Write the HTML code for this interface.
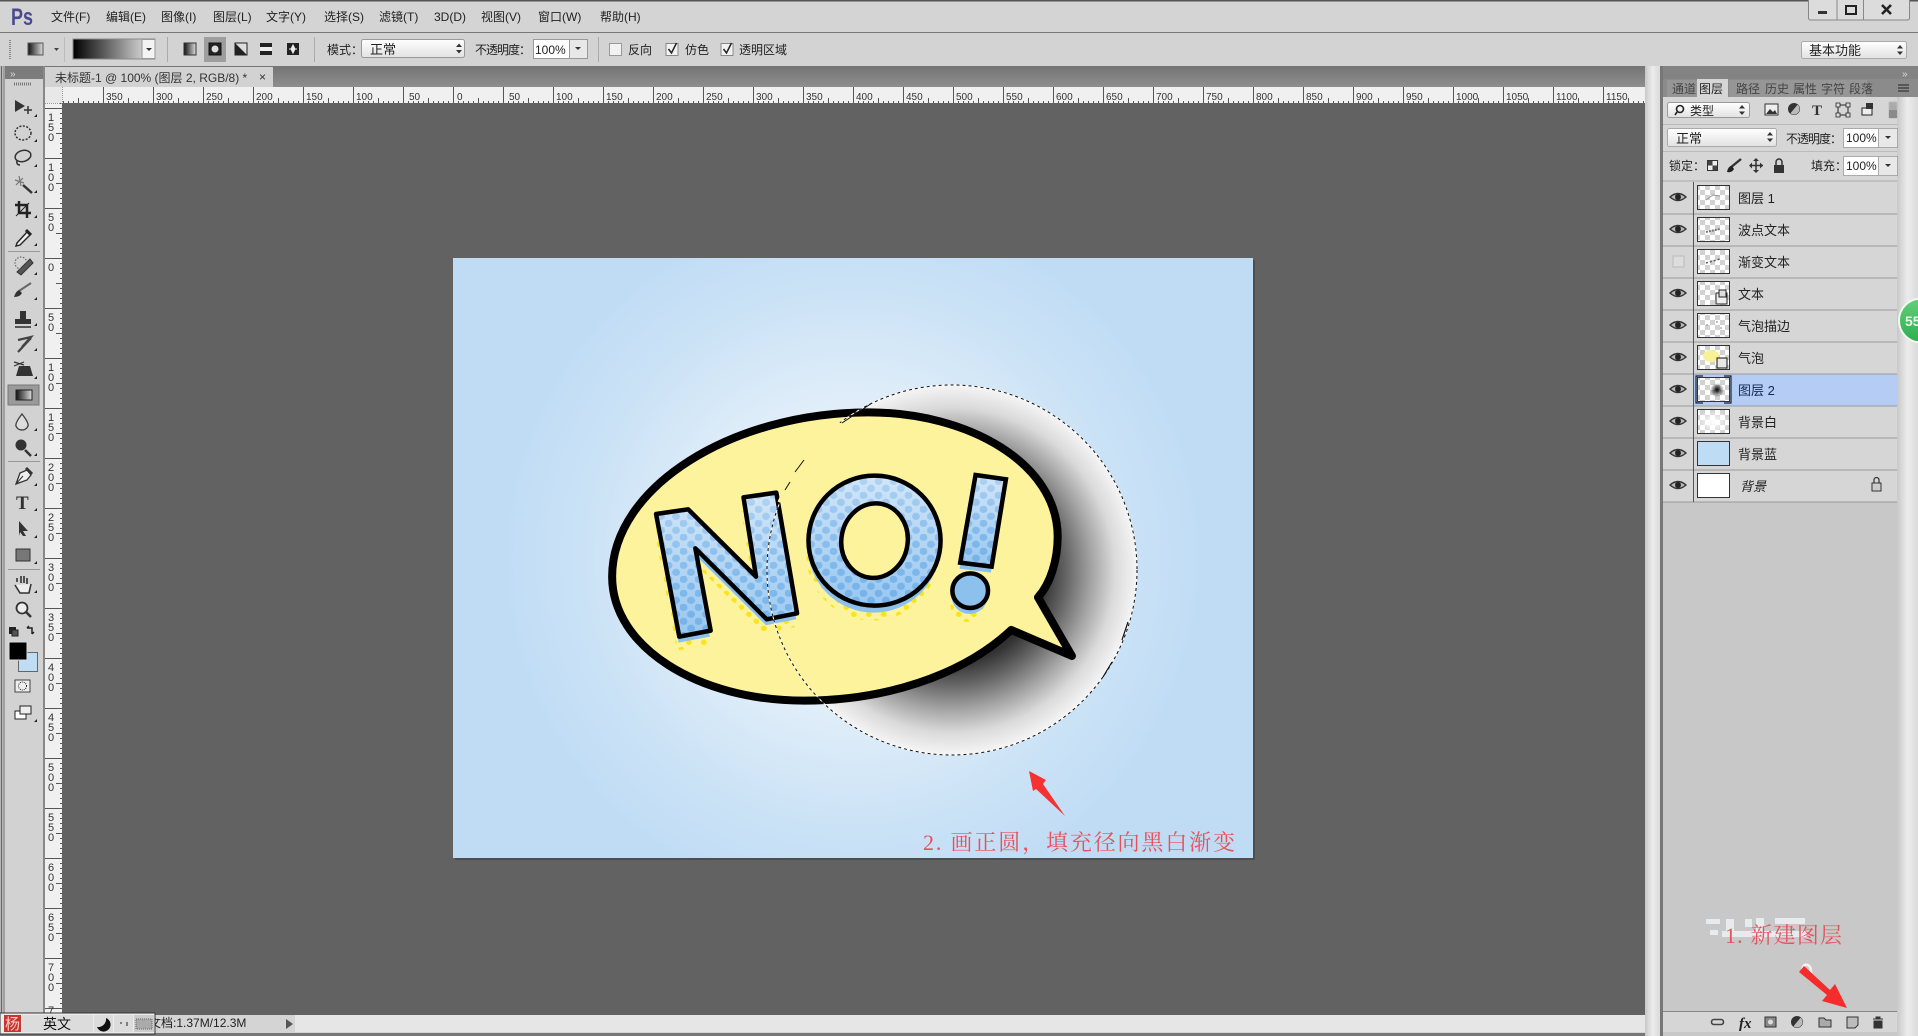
<!DOCTYPE html>
<html lang="zh">
<head>
<meta charset="utf-8">
<title>Photoshop</title>
<style>
html,body{margin:0;padding:0;width:1918px;height:1036px;overflow:hidden;background:#d4d4d4}
svg{display:block}
text{font-family:"Liberation Sans","Noto Sans CJK SC",sans-serif;fill:#222;font-size:12px}
.m text{font-size:12px}
.r text{font-size:10px;fill:#333}
.rv text{font-size:11px;fill:#333}
.l text{font-size:13px;fill:#222}
.nb{vector-effect:non-scaling-stroke}
</style>
</head>
<body>
<svg width="1918" height="1036" viewBox="0 0 1918 1036" xmlns="http://www.w3.org/2000/svg">
<defs>
<pattern id="chk" width="10" height="10" patternUnits="userSpaceOnUse"><rect width="10" height="10" fill="#fff"/><rect width="5" height="5" fill="#d2d2d2"/><rect x="5" y="5" width="5" height="5" fill="#d2d2d2"/></pattern>
<pattern id="tickH" width="50" height="16" patternUnits="userSpaceOnUse" x="453" y="87">
<path d="M.5 0V16M5.5 14V16M10.5 14V16M15.5 14V16M20.5 14V16M25.5 11V16M30.5 14V16M35.5 14V16M40.5 14V16M45.5 14V16" stroke="#555" fill="none"/></pattern>
<pattern id="tickV" width="17" height="50" patternUnits="userSpaceOnUse" x="45" y="258">
<path d="M0 .5H17M15 5.5H17M15 10.5H17M15 15.5H17M15 20.5H17M11 25.5H17M15 30.5H17M15 35.5H17M15 40.5H17M15 45.5H17" stroke="#555" fill="none"/></pattern>
<radialGradient id="bg" gradientUnits="userSpaceOnUse" cx="853" cy="558" r="350">
<stop offset="0" stop-color="#f4f8fc"/><stop offset=".35" stop-color="#e6f1fa"/><stop offset=".75" stop-color="#cce3f6"/><stop offset="1" stop-color="#c0dcf5"/></radialGradient>
<radialGradient id="circ" gradientUnits="userSpaceOnUse" cx="952" cy="570" r="185">
<stop offset="0" stop-color="#000"/><stop offset=".5" stop-color="#333"/><stop offset=".62" stop-color="#666"/><stop offset=".75" stop-color="#a2a2a2"/><stop offset=".88" stop-color="#dadada"/><stop offset="1" stop-color="#f5f5f5"/></radialGradient>
<linearGradient id="lb" x1="0" y1="0" x2="0" y2="1"><stop offset="0" stop-color="#d2e6f8"/><stop offset="1" stop-color="#98c7f0"/></linearGradient>
<linearGradient id="fadeG" x1="0" y1="0" x2="0" y2="1"><stop offset="0" stop-color="#555"/><stop offset="1" stop-color="#fff"/></linearGradient>
<mask id="fade" maskContentUnits="objectBoundingBox" x="0" y="0" width="1" height="1"><rect width="1" height="1" fill="url(#fadeG)"/></mask>
<pattern id="ht" width="42" height="42" patternUnits="userSpaceOnUse">
<circle cx="10" cy="10" r="11" fill="#74b1e8"/><circle cx="31" cy="31" r="11" fill="#74b1e8"/></pattern>
<pattern id="yd" width="42" height="42" patternUnits="userSpaceOnUse">
<circle cx="10" cy="10" r="8" fill="#f8e41e"/><circle cx="31" cy="31" r="8" fill="#f8e41e"/></pattern>
<linearGradient id="gp" x1="0" y1="0" x2="1" y2="0"><stop offset="0" stop-color="#000"/><stop offset="1" stop-color="#f2f2f2"/></linearGradient>
<linearGradient id="g1" x1="0" y1="0" x2="1" y2="0"><stop offset="0" stop-color="#111"/><stop offset="1" stop-color="#ddd"/></linearGradient>
<linearGradient id="btn" x1="0" y1="0" x2="0" y2="1"><stop offset="0" stop-color="#fff"/><stop offset="1" stop-color="#e2e2e2"/></linearGradient>
<linearGradient id="sb" x1="0" y1="0" x2="1" y2="0"><stop offset="0" stop-color="#c8c8c8"/><stop offset=".5" stop-color="#ececec"/><stop offset="1" stop-color="#dadada"/></linearGradient>
<linearGradient id="tabs" x1="0" y1="0" x2="0" y2="1"><stop offset="0" stop-color="#747474"/><stop offset="1" stop-color="#8e8e8e"/></linearGradient>
<linearGradient id="grn" x1="0" y1="0" x2="0" y2="1"><stop offset="0" stop-color="#62cf78"/><stop offset="1" stop-color="#2fae50"/></linearGradient>
<g id="eye"><path d="M-8 0Q0-7 8 0Q0 7-8 0Z" fill="#bbb" stroke="#333" stroke-width="1.4"/><circle r="3" fill="#222"/></g>
<g id="tri"><path d="M0 0L3-3V0Z" fill="#222"/></g>
<g id="updn"><path d="M-3-1.5L0-5L3-1.5ZM-3 1.5L0 5L3 1.5Z" fill="#333"/></g>
</defs>

<!-- window base -->
<rect width="1918" height="1036" fill="#d4d4d4"/>
<rect width="1918" height="1.5" fill="#555"/>
<rect y="32" width="1918" height="1" fill="#777"/>
<rect y="33" width="1918" height="33" fill="#d3d3d3"/>

<!-- menu -->
<text x="11" y="25" textLength="22" lengthAdjust="spacingAndGlyphs" style="font-size:24px;font-weight:bold;fill:#4a4a90;font-family:'Liberation Sans',sans-serif">Ps</text>
<g class="m">
<text x="51" y="21">文件(F)</text><text x="106" y="21">编辑(E)</text><text x="161" y="21">图像(I)</text><text x="213" y="21">图层(L)</text><text x="266" y="21">文字(Y)</text><text x="324" y="21">选择(S)</text><text x="379" y="21">滤镜(T)</text><text x="434" y="21">3D(D)</text><text x="481" y="21">视图(V)</text><text x="538" y="21">窗口(W)</text><text x="600" y="21">帮助(H)</text>
</g>
<!-- window buttons -->
<path d="M1808.5 0V18Q1808.5 20 1811 20H1907Q1909.5 20 1909.5 18V0" fill="#dcdcdc" stroke="#888"/>
<path d="M1837 0V20M1863.500 0V20" stroke="#888"/>
<rect x="1818" y="11" width="9" height="3" fill="#333"/>
<rect x="1846" y="6" width="10" height="8" fill="none" stroke="#222" stroke-width="2"/>
<path d="M1882 5L1891 14M1891 5L1882 14" stroke="#222" stroke-width="2.600"/>

<!-- options bar -->
<path d="M10 40V60" stroke="#888" stroke-width="2" stroke-dasharray="1 1"/>
<rect x="28" y="43" width="15" height="12" fill="url(#g1)" stroke="#555"/>
<path d="M54 48h5l-2.500 3Z" fill="#444"/>
<rect x="64" y="37" width="1" height="25" fill="#bbb"/>
<rect x="73" y="39" width="82" height="20" fill="url(#gp)" stroke="#888"/>
<rect x="142" y="39.500" width="13" height="19" fill="#f4f4f4" stroke="#999"/>
<path d="M146 48h6l-3 3Z" fill="#333"/>
<rect x="167" y="37" width="1" height="25" fill="#aaa"/>
<rect x="204" y="37" width="22" height="25" fill="#9e9e9e"/>
<rect x="184" y="43" width="12" height="12" fill="url(#g1)" stroke="#333"/>
<rect x="209" y="43" width="12" height="12" fill="#222" stroke="#111"/><circle cx="215" cy="49" r="3.500" fill="#ddd"/>
<path d="M235 43H247V55H235Z" fill="#ddd" stroke="#222"/><path d="M235 43L247 55H235Z" fill="#222"/>
<rect x="260" y="43" width="12" height="12" fill="#222"/><rect x="260" y="47" width="12" height="4" fill="#eee"/>
<rect x="287" y="43" width="12" height="12" fill="#222"/><path d="M293 45L295 49L293 53L291 49ZM289 49H297" fill="#eee" stroke="#eee"/>
<rect x="314" y="37" width="1" height="25" fill="#aaa"/>
<text x="327" y="54" style="font-size:12px">模式：</text>
<rect x="361.500" y="39.500" width="103" height="18" rx="2" fill="url(#btn)" stroke="#999"/>
<text x="370" y="54" style="font-size:13px">正常</text>
<use href="#updn" x="459" y="48.500"/>
<text x="475" y="54" textLength="56" style="font-size:12px">不透明度：</text>
<rect x="533.500" y="39.500" width="36" height="19" fill="#fff" stroke="#999"/>
<text x="535" y="54" style="font-size:12px">100%</text>
<rect x="569.500" y="39.500" width="18" height="19" fill="#e8e8e8" stroke="#999"/>
<path d="M575 47h6l-3 3Z" fill="#333"/>
<rect x="598" y="37" width="1" height="25" fill="#aaa"/>
<rect x="609.500" y="43.500" width="12" height="12" fill="#f2f2f2" stroke="#999"/>
<text x="628" y="54" style="font-size:12px">反向</text>
<rect x="666" y="43.500" width="12" height="12" fill="#f2f2f2" stroke="#888"/>
<path d="M668.500 49L671.500 53L676.500 43" fill="none" stroke="#222" stroke-width="1.500"/>
<text x="685" y="54" style="font-size:12px">仿色</text>
<rect x="721" y="43.500" width="12" height="12" fill="#f2f2f2" stroke="#888"/>
<path d="M723.500 49L726.500 53L731.500 43" fill="none" stroke="#222" stroke-width="1.500"/>
<text x="739" y="54" style="font-size:12px">透明区域</text>
<rect x="1801.500" y="41.500" width="105" height="17" rx="2" fill="url(#btn)" stroke="#aaa"/>
<text x="1809" y="55" style="font-size:13px">基本功能</text>
<use href="#updn" x="1900" y="50"/>

<!-- tab bar -->
<rect y="66" width="1660" height="21" fill="url(#tabs)"/>
<rect x="5" y="66" width="39" height="13" fill="#7c7c7c"/>
<text x="10" y="77" style="font-size:10px;fill:#ddd">»</text>
<rect x="45" y="67" width="228" height="20" fill="#d2d2d2"/>
<text x="55" y="82" style="font-size:12px;fill:#333">未标题-1 @ 100% (图层 2, RGB/8) *</text>
<text x="259" y="81" style="font-size:12px;fill:#333">×</text>

<!-- canvas area -->
<rect x="62" y="103" width="1583" height="912" fill="#626262"/>

<!-- rulers -->
<rect x="45" y="87" width="1600" height="16" fill="#f0f0f0"/>
<rect x="45" y="87" width="1600" height="16" fill="url(#tickH)"/>
<rect x="45" y="87" width="17" height="928" fill="#f0f0f0"/>
<rect x="45" y="103" width="17" height="912" fill="url(#tickV)"/>
<rect x="45" y="87" width="17" height="16" fill="#e8e8e8"/>
<path d="M62.500 87V103" stroke="#999" stroke-dasharray="1 1"/>
<path d="M45 103.500H62" stroke="#999" stroke-dasharray="1 1"/>
<g class="r">
<text x="106" y="100">350</text><text x="156" y="100">300</text><text x="206" y="100">250</text><text x="256" y="100">200</text><text x="306" y="100">150</text><text x="356" y="100">100</text><text x="409" y="100">50</text><text x="457" y="100">0</text><text x="509" y="100">50</text><text x="556" y="100">100</text><text x="606" y="100">150</text><text x="656" y="100">200</text><text x="706" y="100">250</text><text x="756" y="100">300</text><text x="806" y="100">350</text><text x="856" y="100">400</text><text x="906" y="100">450</text><text x="956" y="100">500</text><text x="1006" y="100">550</text><text x="1056" y="100">600</text><text x="1106" y="100">650</text><text x="1156" y="100">700</text><text x="1206" y="100">750</text><text x="1256" y="100">800</text><text x="1306" y="100">850</text><text x="1356" y="100">900</text><text x="1406" y="100">950</text><text x="1456" y="100">1000</text><text x="1506" y="100">1050</text><text x="1556" y="100">1100</text><text x="1606" y="100">1150</text>
</g>
<g class="rv" transform="translate(0 1)">
<text x="48 48 48" y="120 130 140">150</text><text x="48 48 48" y="170 180 190">100</text><text x="48 48" y="220 230">50</text><text x="48" y="270">0</text><text x="48 48" y="320 330">50</text><text x="48 48 48" y="370 380 390">100</text><text x="48 48 48" y="420 430 440">150</text><text x="48 48 48" y="470 480 490">200</text><text x="48 48 48" y="520 530 540">250</text><text x="48 48 48" y="570 580 590">300</text><text x="48 48 48" y="620 630 640">350</text><text x="48 48 48" y="670 680 690">400</text><text x="48 48 48" y="720 730 740">450</text><text x="48 48 48" y="770 780 790">500</text><text x="48 48 48" y="820 830 840">550</text><text x="48 48 48" y="870 880 890">600</text><text x="48 48 48" y="920 930 940">650</text><text x="48 48 48" y="970 980 990">700</text><text x="48" y="1013">7</text>
</g>

<!-- document -->
<rect x="455" y="260" width="800" height="600" fill="#4e4e4e"/>
<rect x="453" y="258" width="800" height="600" fill="url(#bg)"/>
<circle cx="952" cy="570" r="185" fill="url(#circ)"/>

<g transform="translate(590 380) scale(.357 .3333)">
<path class="nb" d="M1255 652C1290 610 1310 540 1310 470C1310 250 1060 97 780 97C400 97 62 320 62 590C62 800 300 962 600 962C820 962 1040 890 1180 750L1350 828Z" fill="#fdf39c" stroke="#000" stroke-width="8" stroke-linejoin="round"/>
<!-- yellow halftone -->
<g transform="translate(-6 42)" fill="url(#yd)">
<path d="M185 402L275 388L465 590L430 352L522 338L580 700L495 718L295 505L338 752L250 770Z"/>
<ellipse cx="797" cy="482" rx="185" ry="198"/>
<ellipse cx="1065" cy="632" rx="50" ry="52"/>
</g>
<!-- blue shadow -->
<g transform="translate(-2 18)" fill="#8cc1ee">
<path d="M185 402L275 388L465 590L430 352L522 338L580 700L495 718L295 505L338 752L250 770Z"/>
<ellipse cx="797" cy="482" rx="185" ry="198"/>
<path d="M1080 285L1165 298L1125 560L1037 548Z"/>
<ellipse cx="1065" cy="632" rx="50" ry="52"/>
</g>
<!-- letters -->
<g>
<path d="M185 402L275 388L465 590L430 352L522 338L580 700L495 718L295 505L338 752L250 770Z" fill="url(#lb)"/>
<path d="M185 402L275 388L465 590L430 352L522 338L580 700L495 718L295 505L338 752L250 770Z" fill="url(#ht)" mask="url(#fade)"/>
<path class="nb" d="M185 402L275 388L465 590L430 352L522 338L580 700L495 718L295 505L338 752L250 770Z" fill="none" stroke="#000" stroke-width="4.500" stroke-linejoin="round"/>
<ellipse cx="797" cy="482" rx="185" ry="195" fill="url(#lb)"/>
<ellipse cx="797" cy="482" rx="185" ry="195" fill="url(#ht)" mask="url(#fade)"/>
<ellipse class="nb" cx="797" cy="482" rx="185" ry="195" fill="none" stroke="#000" stroke-width="4.500"/>
<ellipse cx="797" cy="482" rx="93" ry="112" fill="#fdf39c" transform="rotate(6 797 482)"/>
<ellipse class="nb" cx="797" cy="482" rx="93" ry="112" fill="none" stroke="#000" stroke-width="4.500" transform="rotate(6 797 482)"/>
<path d="M1080 285L1165 298L1125 560L1037 548Z" fill="url(#lb)"/>
<path d="M1080 285L1165 298L1125 560L1037 548Z" fill="url(#ht)" mask="url(#fade)"/>
<path class="nb" d="M1080 285L1165 298L1125 560L1037 548Z" fill="none" stroke="#000" stroke-width="4.500"/>
<ellipse cx="1065" cy="632" rx="50" ry="52" fill="#8cc1ee"/>
<ellipse class="nb" cx="1065" cy="632" rx="50" ry="52" fill="none" stroke="#000" stroke-width="4.500"/>
</g>
</g>

<!-- selection -->
<circle cx="952" cy="570" r="185" fill="none" stroke="#fff" stroke-width="1"/>
<circle cx="952" cy="570" r="185" fill="none" stroke="#111" stroke-width="1" stroke-dasharray="3 3"/>
<!-- selection gap across the bubble's upper-left, leaving a few long dashes -->
<path d="M840 423A185 185 0 0 0 779 502" fill="none" stroke="#fdf39c" stroke-width="3"/>
<path d="M842 423L872 403M795 472L804 460M785 490L790 482" stroke="#111" stroke-width="1" fill="none"/>
<path d="M1128 622L1122 640M1112 662L1103 677" stroke="#111" stroke-width="1.200" fill="none"/>

<!-- annotation 2 -->
<path d="M1029 771L1046 780L1043 784L1065 816L1036 789L1033 791Z" fill="#f43232"/>
<text x="923" y="850" textLength="312" lengthAdjust="spacing" style="font-size:22px;fill:#e8505c;font-family:'Liberation Serif','Noto Serif CJK SC',serif">2. 画正圆，填充径向黑白渐变</text>

<!-- left toolbar -->
<rect x="0" y="66" width="5" height="970" fill="#b8b8b8"/>
<rect x="1" y="66" width="1" height="970" fill="#666"/>
<rect x="3.500" y="66" width="1" height="970" fill="#888"/>
<rect x="5" y="79" width="39" height="936" fill="#d2d2d2"/>
<rect x="43" y="66" width="2" height="950" fill="#888"/>
<path d="M14 84H32" stroke="#777" stroke-width="3" stroke-dasharray="1 1"/>
<!-- move -->
<path d="M15 100L25 106L15 112Z" fill="#333"/><path d="M24 110H32M28 106V114" stroke="#333" stroke-width="1.500"/>
<use href="#tri" x="34" y="117"/>
<!-- marquee -->
<ellipse cx="23" cy="133" rx="8" ry="7" fill="none" stroke="#333" stroke-width="1.500" stroke-dasharray="2 1.500"/><use href="#tri" x="34" y="142"/>
<!-- lasso -->
<ellipse cx="23" cy="156" rx="8" ry="5.500" fill="none" stroke="#333" stroke-width="1.500" transform="rotate(-15 23 156)"/><path d="M17 160Q16 165 20 165" fill="none" stroke="#333" stroke-width="1.500"/><use href="#tri" x="34" y="167"/>
<!-- wand -->
<path d="M23 185L32 193" stroke="#333" stroke-width="2.500"/><path d="M15 180L24 183M19 176L21 186M16 185L23 178" stroke="#777" stroke-width="1.200"/><use href="#tri" x="34" y="193"/>
<!-- crop -->
<path d="M19 201V213H31M15 205H27V218" fill="none" stroke="#222" stroke-width="2.500"/><path d="M16 216L29 203" stroke="#222"/><use href="#tri" x="34" y="218"/>
<!-- eyedropper -->
<path d="M17 243L27 232L30 235L20 245L16 246Z" fill="#eee" stroke="#222" stroke-width="1.400"/><path d="M26 230L31 235" stroke="#222" stroke-width="3"/><use href="#tri" x="34" y="246"/>
<rect x="8" y="251" width="32" height="1" fill="#999"/>
<!-- heal -->
<path d="M17 272L30 259L33 263L21 275Z" fill="#555" stroke="#333"/><circle cx="21" cy="263" r="6" fill="none" stroke="#555" stroke-dasharray="1.500 1.500"/><use href="#tri" x="34" y="275"/>
<!-- brush -->
<path d="M19 291L31 283" stroke="#666" stroke-width="2"/><path d="M14 297Q16 291 19 290L22 293Q20 297 14 297Z" fill="#333"/><use href="#tri" x="34" y="300"/>
<!-- stamp -->
<rect x="20" y="311" width="6" height="8" fill="#333"/><rect x="15" y="319" width="16" height="5" fill="#333"/><rect x="15" y="326" width="16" height="2" fill="#555"/><use href="#tri" x="34" y="326"/>
<!-- history -->
<path d="M18 340L31 337L22 347L31 338L18 352" fill="none" stroke="#444" stroke-width="2.200"/><use href="#tri" x="34" y="351"/>
<!-- eraser -->
<path d="M19 366H30L33 376H16Z" fill="#333"/><path d="M14 362L24 365M14 366L24 362" stroke="#333" stroke-width="1.200"/><use href="#tri" x="34" y="379"/>
<!-- gradient active -->
<rect x="8" y="385" width="31" height="20" fill="#9a9a9a" stroke="#777"/>
<rect x="16" y="390" width="16" height="10" fill="url(#g1)" stroke="#222"/>
<!-- blur -->
<path d="M22 414Q29 423 28 426A6.500 6.500 0 0 1 16 426Q15 423 22 414Z" fill="#ddd" stroke="#444" stroke-width="1.400"/><use href="#tri" x="34" y="431"/>
<!-- dodge -->
<circle cx="21" cy="445" r="5.500" fill="#333"/><path d="M25 450L31 456" stroke="#333" stroke-width="2.500"/><use href="#tri" x="34" y="456"/>
<rect x="8" y="461" width="32" height="1" fill="#999"/>
<!-- pen -->
<path d="M16 484L20 473L27 470L31 475L27 480Z" fill="#eee" stroke="#333" stroke-width="1.300"/><path d="M26 468L32 474" stroke="#333" stroke-width="3"/><path d="M16 484L23 476" stroke="#333"/><use href="#tri" x="34" y="486"/>
<!-- T -->
<text x="16" y="509" style="font-size:19px;fill:#333;font-family:'Liberation Serif',serif;font-weight:bold">T</text><use href="#tri" x="34" y="511"/>
<!-- path sel -->
<path d="M19 521L28 531L23 531L26 536H23L20 532L19 536Z" fill="#333"/><use href="#tri" x="34" y="538"/>
<!-- rect -->
<rect x="16" y="549" width="14" height="12" fill="#777" stroke="#333"/><use href="#tri" x="34" y="564"/>
<rect x="8" y="569" width="32" height="1" fill="#999"/>
<!-- hand -->
<path d="M17 582V578M21 583V576M24 583V576M27 584V578M15 585L20 593H29L31 584" fill="#eee" stroke="#333" stroke-width="1.600"/><use href="#tri" x="34" y="593"/>
<!-- zoom -->
<circle cx="22" cy="608" r="5.500" fill="#eee" stroke="#333" stroke-width="1.800"/><path d="M26 612L31 617" stroke="#333" stroke-width="2.500"/>
<!-- colours -->
<rect x="9" y="627" width="7" height="7" fill="#222"/><rect x="12" y="630" width="6" height="6" fill="#555" stroke="#222"/>
<path d="M27 628H32V634M27 628L29 626M32 634L34 632" fill="none" stroke="#222" stroke-width="1.500"/>
<rect x="18.500" y="652.500" width="19" height="19" fill="#bfdcf5" stroke="#666"/>
<rect x="9" y="642" width="18" height="18" fill="#000" stroke="#ddd"/>
<!-- mask -->
<rect x="15" y="680" width="15" height="12" fill="#eee" stroke="#444"/><circle cx="22.500" cy="686" r="4" fill="none" stroke="#222" stroke-dasharray="1 1"/>
<!-- screen -->
<rect x="15" y="711" width="11" height="8" fill="#fff" stroke="#222"/><rect x="20" y="706" width="11" height="8" fill="#eee" stroke="#222"/><use href="#tri" x="34" y="722"/>

<!-- status bar -->
<rect x="0" y="1015" width="1645" height="17" fill="#d4d4d4"/>
<rect x="295" y="1015" width="1350" height="17" fill="#e6e6e6"/>
<rect y="1033" width="1918" height="3" fill="#777"/>
<text x="149" y="1027" style="font-size:12px">文档:1.37M/12.3M</text>
<path d="M286 1019L293 1024L286 1029Z" fill="#555"/>
<!-- IME bar -->
<rect x="0" y="1013" width="155" height="21" fill="#ececec" stroke="#333"/>
<rect x="4" y="1015" width="17" height="17" fill="#c8342e"/>
<text x="5" y="1029" style="font-size:15px;fill:#f5d0c8">杨</text>
<rect x="22" y="1015" width="71" height="17" fill="#dcdcdc"/>
<text x="43" y="1029" style="font-size:14px;fill:#111">英文</text>
<rect x="94" y="1015" width="19" height="17" fill="#dcdcdc"/>
<path d="M106 1018A7 7 0 1 1 97 1027A8 8 0 0 0 106 1018Z" fill="#111"/>
<rect x="114" y="1015" width="19" height="17" fill="#dcdcdc"/>
<path d="M121 1022V1024M127 1022V1026" stroke="#222"/>
<rect x="134" y="1015" width="20" height="17" fill="#ccc"/>
<rect x="136" y="1019" width="16" height="10" fill="#aaa" stroke="#666" stroke-dasharray="1 1"/>

<!-- scrollbar right of canvas -->
<rect x="1645" y="66" width="15" height="970" fill="url(#sb)"/>
<rect x="1660" y="66" width="3" height="970" fill="#777"/>

<!-- right panel -->
<rect x="1663" y="66" width="255" height="970" fill="#c8c8c8"/>
<rect x="1663" y="66" width="234" height="13" fill="#7f7f7f"/>
<rect x="1897" y="66" width="21" height="970" fill="url(#sb)"/>
<rect x="1663" y="66" width="255" height="13" fill="#838383"/>
<text x="1902" y="77" style="font-size:10px;fill:#ddd">»</text>
<rect x="1663" y="79" width="255" height="18" fill="#8b8b8b"/>
<rect x="1667" y="80" width="30" height="17" fill="#969696"/><rect x="1729" y="80" width="138" height="17" fill="#969696"/>
<rect x="1697" y="79" width="31" height="18" fill="#d6d6d6"/>
<text x="1672" y="93" style="font-size:12px;fill:#444">通道</text>
<text x="1699" y="93" style="font-size:12px;fill:#222">图层</text>
<text x="1736" y="93" style="font-size:12px;fill:#444">路径</text>
<text x="1765" y="93" style="font-size:12px;fill:#444">历史</text>
<text x="1793" y="93" style="font-size:12px;fill:#444">属性</text>
<text x="1821" y="93" style="font-size:12px;fill:#444">字符</text>
<text x="1849" y="93" style="font-size:12px;fill:#444">段落</text>
<path d="M1898 85H1909M1898 88H1909M1898 91H1909" stroke="#222"/>
<rect x="1663" y="97" width="234" height="85" fill="#d6d6d6"/>
<rect x="1663" y="124" width="234" height="1" fill="#bbb"/>
<rect x="1663" y="151" width="234" height="1" fill="#bbb"/>
<rect x="1663" y="180.500" width="234" height="1" fill="#aaa"/>
<!-- filter row -->
<rect x="1667.500" y="102.500" width="82" height="15" rx="2" fill="url(#btn)" stroke="#999"/>
<circle cx="1680" cy="109" r="3.500" fill="none" stroke="#222" stroke-width="1.600"/><path d="M1677 112L1675 115" stroke="#222" stroke-width="1.600"/>
<text x="1690" y="115" style="font-size:12px">类型</text>
<use href="#updn" x="1742" y="110"/>
<rect x="1765" y="104" width="13" height="11" fill="#eee" stroke="#333"/><path d="M1766 114L1770 109L1773 112L1775 110L1777 114Z" fill="#333"/>
<circle cx="1794" cy="109" r="5.500" fill="#333" stroke="#333"/><path d="M1794 103.500A5.500 5.500 0 0 1 1794 114.500Z" fill="#bbb" transform="rotate(40 1794 109)"/>
<text x="1812" y="115" style="font-size:15px;font-weight:bold;fill:#333;font-family:'Liberation Serif',serif">T</text>
<rect x="1838" y="105" width="10" height="10" fill="none" stroke="#222"/><path d="M1836 103h4v4h-4zM1846 103h4v4h-4zM1836 113h4v4h-4zM1846 113h4v4h-4z" fill="#ddd" stroke="#222" stroke-width=".8"/>
<path d="M1862 108H1872V115H1862Z" fill="#eee" stroke="#222"/><path d="M1866 103H1873V109H1866Z" fill="#333"/>
<rect x="1889" y="102" width="8" height="16" rx="1" fill="#aaa" stroke="#bbb"/>
<rect x="1889" y="110" width="8" height="8" fill="#8a8a8a"/>
<!-- mode row -->
<rect x="1667.500" y="128.500" width="109" height="18" rx="2" fill="url(#btn)" stroke="#aaa"/>
<text x="1676" y="143" style="font-size:13px">正常</text>
<use href="#updn" x="1770" y="137"/>
<text x="1786" y="143" textLength="56" style="font-size:12px">不透明度：</text>
<rect x="1843.500" y="128.500" width="35" height="19" fill="#fff" stroke="#aaa"/>
<text x="1846" y="142" style="font-size:12px">100%</text>
<rect x="1878.500" y="128.500" width="19" height="19" fill="#e8e8e8" stroke="#aaa"/>
<path d="M1885 136h6l-3 3Z" fill="#333"/>
<!-- lock row -->
<text x="1669" y="170" style="font-size:12px">锁定：</text>
<rect x="1707.500" y="160.500" width="10" height="10" fill="#eee" stroke="#333"/><path d="M1708 161H1712.500V165.500H1708ZM1712.500 165.500H1717V170H1712.500Z" fill="#444"/>
<path d="M1730 168L1741 159" stroke="#333" stroke-width="2.400"/><path d="M1727 172Q1728 166 1732 166L1734 169Q1732 173 1727 172Z" fill="#222"/>
<path d="M1756 159V172M1750 165.500H1763" stroke="#333" stroke-width="1.500"/><path d="M1753 161L1756 158L1759 161M1753 170L1756 173L1759 170M1752 162.500L1749 165.500L1752 168.500M1760 162.500L1763 165.500L1760 168.500" fill="#333"/>
<rect x="1774" y="165" width="10" height="8" fill="#333"/><path d="M1776 165V162A3 3 0 0 1 1782 162V165" fill="none" stroke="#333" stroke-width="1.500"/>
<text x="1811" y="170" style="font-size:12px">填充：</text>
<rect x="1843.500" y="156.500" width="35" height="19" fill="#fff" stroke="#aaa"/>
<text x="1846" y="170" style="font-size:12px">100%</text>
<rect x="1878.500" y="156.500" width="19" height="19" fill="#e8e8e8" stroke="#aaa"/>
<path d="M1885 164h6l-3 3Z" fill="#333"/>

<!-- layers -->
<rect x="1663" y="182" width="234" height="320" fill="#d6d6d6"/>
<rect x="1693" y="374" width="204" height="32" fill="#b5cdf4"/>
<g fill="#999">
<rect x="1663" y="213.500" width="234" height="1"/><rect x="1663" y="245.500" width="234" height="1"/><rect x="1663" y="277.500" width="234" height="1"/><rect x="1663" y="309.500" width="234" height="1"/><rect x="1663" y="341.500" width="234" height="1"/><rect x="1663" y="373.500" width="234" height="1"/><rect x="1663" y="405.500" width="234" height="1"/><rect x="1663" y="437.500" width="234" height="1"/><rect x="1663" y="469.500" width="234" height="1"/><rect x="1663" y="501.500" width="234" height="1"/>
</g>
<rect x="1693" y="182" width="1" height="320" fill="#555"/>
<use href="#eye" x="1678" y="197"/><use href="#eye" x="1678" y="229"/>
<rect x="1673" y="256" width="11" height="11" fill="#ddd" stroke="#bbb"/>
<use href="#eye" x="1678" y="293"/><use href="#eye" x="1678" y="325"/><use href="#eye" x="1678" y="357"/><use href="#eye" x="1678" y="389"/><use href="#eye" x="1678" y="421"/><use href="#eye" x="1678" y="453"/><use href="#eye" x="1678" y="485"/>
<g stroke="#333">
<rect x="1697.500" y="185.500" width="32" height="24" fill="url(#chk)"/>
<rect x="1697.500" y="217.500" width="32" height="24" fill="url(#chk)"/>
<rect x="1697.500" y="249.500" width="32" height="24" fill="url(#chk)"/>
<rect x="1697.500" y="281.500" width="32" height="24" fill="url(#chk)"/>
<rect x="1697.500" y="313.500" width="32" height="24" fill="url(#chk)"/>
<rect x="1697.500" y="345.500" width="32" height="24" fill="url(#chk)"/>
<rect x="1697.500" y="377.500" width="32" height="24" fill="url(#chk)"/>
<rect x="1697.500" y="409.500" width="32" height="24" fill="url(#chk)"/>
<rect x="1697.500" y="441.500" width="32" height="24" fill="#bfdcf5"/>
<rect x="1697.500" y="473.500" width="32" height="24" fill="#fff"/>
</g>
<path d="M1706 200L1713 195L1720 196" stroke="#999" fill="none"/>
<path d="M1706 232L1720 229" stroke="#777" stroke-width="2" stroke-dasharray="2 1"/>
<path d="M1706 263L1720 259" stroke="#555" stroke-width="1.500" stroke-dasharray="2 2"/>
<rect x="1716" y="293" width="11" height="11" fill="#eee" stroke="#222"/><rect x="1719" y="290" width="7" height="7" fill="#ddd" stroke="#222"/>
<path d="M1706 325H1708M1716 322H1718M1720 328H1722" stroke="#888"/>
<ellipse cx="1711" cy="356" rx="8" ry="6" fill="#f8f296"/>
<rect x="1717" y="358" width="10" height="10" fill="#e8e8e8" stroke="#111"/>
<radialGradient id="tdot" cx=".5" cy=".5" r=".5"><stop offset="0" stop-color="#000"/><stop offset="1" stop-color="#000" stop-opacity="0"/></radialGradient>
<circle cx="1717" cy="390" r="7" fill="url(#tdot)"/>
<path d="M1703 376H1696V403H1703M1724 376H1731V403H1724" fill="none" stroke="#123" stroke-width="1.200"/>
<radialGradient id="tw" cx=".5" cy=".5" r=".5"><stop offset="0" stop-color="#fff"/><stop offset="1" stop-color="#fff" stop-opacity="0"/></radialGradient>
<ellipse cx="1713" cy="422" rx="16" ry="12" fill="url(#tw)"/>
<g class="l">
<text x="1738" y="203">图层 1</text>
<text x="1738" y="235">波点文本</text>
<text x="1738" y="267">渐变文本</text>
<text x="1738" y="299">文本</text>
<text x="1738" y="331">气泡描边</text>
<text x="1738" y="363">气泡</text>
<text x="1738" y="395" style="fill:#122a55">图层 2</text>
<text x="1738" y="427">背景白</text>
<text x="1738" y="459">背景蓝</text>
<text x="1740" y="491" style="font-style:italic">背景</text>
</g>
<rect x="1872" y="483" width="9" height="8" fill="#ccc" stroke="#333"/><path d="M1874 483V480A2.500 2.500 0 0 1 1879 480V483" fill="none" stroke="#333" stroke-width="1.200"/>

<!-- annotation 1 -->
<g fill="#eef2f4" opacity=".85">
<rect x="1706" y="919" width="14" height="5"/><rect x="1726" y="919" width="8" height="18"/><rect x="1745" y="919" width="7" height="8"/><rect x="1756" y="918" width="8" height="22"/><rect x="1775" y="918" width="30" height="6"/><rect x="1710" y="930" width="8" height="5"/><rect x="1722" y="931" width="85" height="6"/>
</g>
<text x="1725" y="943" textLength="117" lengthAdjust="spacing" style="font-size:22px;fill:#e25560;font-family:'Liberation Serif','Noto Serif CJK SC',serif">1. 新建图层</text>
<path d="M1802 973Q1802 963 1808 965Q1813 968 1810 981" fill="none" stroke="#f2f2f2" stroke-width="2.500"/>
<path d="M1799 972L1804 966L1830 990L1835 984L1847 1008L1822 1001L1827 995Z" fill="#f42c2c"/>

<!-- panel footer -->
<rect x="1663" y="1012" width="234" height="20" fill="#d6d6d6"/>
<rect x="1663" y="1011" width="234" height="1" fill="#888"/>
<rect x="1711.500" y="1019.500" width="12" height="5" rx="2.500" fill="none" stroke="#444" stroke-width="1.600"/>
<text x="1739" y="1028" style="font-size:15px;font-style:italic;font-weight:bold;fill:#222;font-family:'Liberation Serif',serif">fx</text>
<rect x="1765" y="1017" width="11" height="10" fill="#888" stroke="#333"/><circle cx="1770.500" cy="1022" r="2.500" fill="#ddd"/>
<circle cx="1797" cy="1022" r="5.500" fill="#333" stroke="#333"/><path d="M1797 1016.500A5.500 5.500 0 0 1 1797 1027.500Z" fill="#bbb" transform="rotate(40 1797 1022)"/>
<path d="M1819 1018H1824L1826 1020H1831V1027H1819Z" fill="#aaa" stroke="#333"/>
<path d="M1847 1017H1858V1025L1855 1028H1847Z" fill="#bbb" stroke="#333"/>
<path d="M1873 1019H1883M1876 1019V1017H1880V1019M1874 1021H1882V1028H1874Z" fill="#333" stroke="#333"/>

<!-- green badge -->
<circle cx="1921" cy="320.500" r="22" fill="url(#grn)" stroke="#eef7ee" stroke-width="2"/>
<text x="1905" y="326" style="font-size:14px;font-weight:bold;fill:#e8f8ea">55</text>
</svg>
</body>
</html>
